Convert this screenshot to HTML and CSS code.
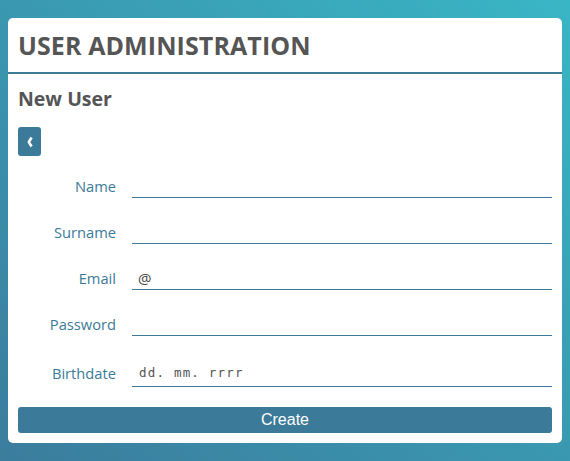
FILE: index.html
```html
<!DOCTYPE html>
<html>
<head>
<meta charset="utf-8">
<link rel="stylesheet" href="styles.css">
</head>
<body>
<div class="card">
  <header class="card-header">
    <h1 class="title">USER ADMINISTRATION</h1>
  </header>
  <main class="card-body">
    <h2 class="subtitle">New User</h2>
    <button class="back-btn" type="button" aria-label="Back">
      <svg width="8" height="12" viewBox="0 0 8 12"><path d="M5.6 1.5 L2.8 6 L5.6 10.5" fill="none" stroke="#fff" stroke-width="2.6" stroke-linejoin="round"/></svg>
    </button>
    <form class="form">
      <label class="label">Name</label>
      <div class="field"><input class="input" type="text"></div>
      <label class="label">Surname</label>
      <div class="field"><input class="input" type="text"></div>
      <label class="label">Email</label>
      <div class="field"><input class="input" type="text" placeholder="@"></div>
      <label class="label">Password</label>
      <div class="field"><input class="input" type="password"></div>
      <label class="label label-date">Birthdate</label>
      <div class="field field-date"><input class="input input-date" type="text" placeholder="dd. mm. rrrr"></div>
    </form>
    <button class="create-btn" type="button">Create</button>
  </main>
</div>
</body>
</html>
```

FILE: styles.css
```css
* { box-sizing: border-box; }
html, body { margin: 0; height: 100%; }
body {
  padding: 18px 8px;
  background: linear-gradient(to top right, #3b7c9d 0%, #3a98b0 50%, #39b6c5 100%);
  font-family: "Open Sans", "Noto Sans", sans-serif;
  overflow: hidden;
}
.card {
  background: #fff;
  border-radius: 5px;
  height: 425px;
  display: flex;
  flex-direction: column;
}
.card-header {
  height: 56px;
  border-bottom: 2px solid #3b7a99;
  display: flex;
  align-items: center;
  padding: 0 10px;
}
.title {
  margin: 0;
  font-size: 25px;
  font-weight: 700;
  color: #555;
  line-height: 1;
  letter-spacing: 0.1px;
}
.card-body {
  padding: 13px 10px 10px;
  display: flex;
  flex-direction: column;
}
.subtitle {
  margin: 0;
  font-size: 19.5px;
  font-weight: 700;
  color: #555;
  line-height: 24px;
  height: 24px;
}
.back-btn {
  margin-top: 16px;
  width: 23px;
  height: 29px;
  padding: 0;
  border: 0;
  border-radius: 3px;
  background: #3b7a99;
  display: flex;
  align-items: center;
  justify-content: center;
}
.form {
  margin: 19px 0 0;
  display: grid;
  grid-template-columns: 98px 1fr;
  column-gap: 16px;
  row-gap: 23px;
  align-items: end;
}
.label {
  color: #3b7a99;
  font-size: 14.7px;
  text-align: right;
  line-height: 23px;
  height: 23px;
  padding-bottom: 2px;
}
.label-date { height: 28px; line-height: 28px; padding-bottom: 0; }
.input {
  display: block;
  width: 100%;
  height: 23px;
  border: 0;
  border-bottom: 1px solid #3b7a99;
  padding: 0 6px;
  font-family: "Open Sans", "Noto Sans", sans-serif;
  font-size: 15px;
  color: #444;
  outline: none;
  background: transparent;
}
.input::placeholder { color: #444; opacity: 1; }
.input-date {
  height: 28px;
  font-family: "DejaVu Sans Mono", monospace;
  font-size: 12.5px;
  letter-spacing: 1.2px;
  padding-left: 7px;
}
.input-date::placeholder { color: #555; }
.create-btn {
  margin-top: 20px;
  height: 26px;
  border: 0;
  border-radius: 3px;
  background: #3b7a99;
  color: #fff;
  font-family: "Liberation Sans", Arial, sans-serif;
  font-size: 16px;
  padding: 0;
}
```
